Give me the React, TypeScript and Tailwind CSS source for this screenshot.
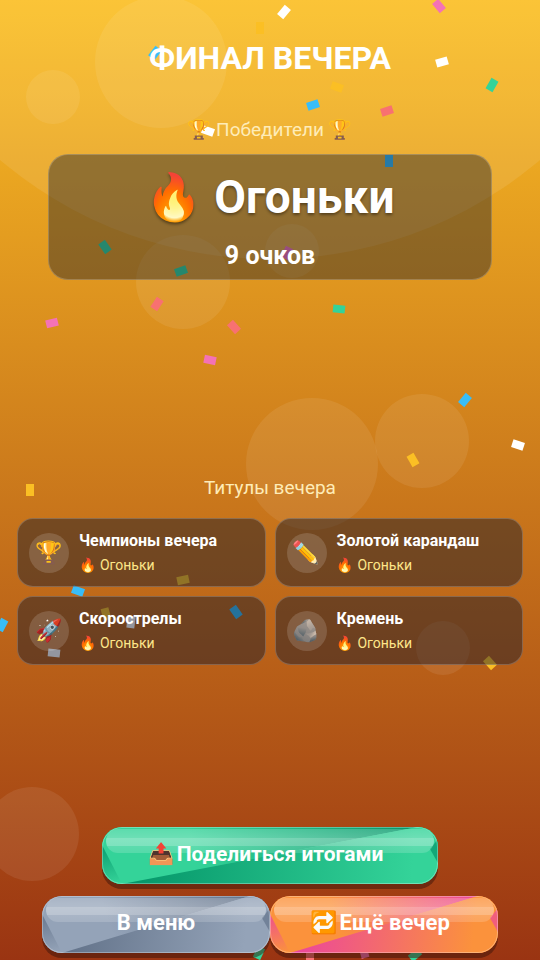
import { useId } from "react";

type Piece = { x: number; y: number; angle: number; color: string };

const YELLOW = "#fbbf24";
const BLUE = "#38bdf8";
const PINK = "#f472b6";
const RED = "#f87171";
const GREEN = "#34d399";
const WHITE = "#ffffff";

const confetti: Piece[] = [
  { x: 260, y: 28, angle: 90, color: YELLOW },
  { x: 155, y: 53, angle: -52, color: BLUE },
  { x: 208, y: 131, angle: 20, color: WHITE },
  { x: 284, y: 12, angle: -50, color: WHITE },
  { x: 439, y: 6, angle: 50, color: PINK },
  { x: 442, y: 62, angle: -16, color: WHITE },
  { x: 492, y: 85, angle: -60, color: GREEN },
  { x: 337, y: 87, angle: 20, color: YELLOW },
  { x: 313, y: 105, angle: -18, color: BLUE },
  { x: 387, y: 111, angle: -18, color: RED },
  { x: 389, y: 161, angle: 90, color: BLUE },
  { x: 105, y: 247, angle: 55, color: GREEN },
  { x: 181, y: 271, angle: -20, color: GREEN },
  { x: 287, y: 253, angle: -65, color: PINK },
  { x: 157, y: 304, angle: -57, color: RED },
  { x: 339, y: 309, angle: 6, color: GREEN },
  { x: 52, y: 323, angle: -14, color: PINK },
  { x: 234, y: 327, angle: 48, color: RED },
  { x: 210, y: 360, angle: 12, color: PINK },
  { x: 465, y: 400, angle: -50, color: BLUE },
  { x: 518, y: 445, angle: 18, color: WHITE },
  { x: 413, y: 460, angle: 60, color: YELLOW },
  { x: 30, y: 490, angle: 90, color: YELLOW },
  { x: 183, y: 580, angle: -12, color: YELLOW },
  { x: 78, y: 591, angle: 20, color: BLUE },
  { x: 2, y: 625, angle: -62, color: BLUE },
  { x: 106, y: 614, angle: 75, color: YELLOW },
  { x: 131, y: 622, angle: 97, color: WHITE },
  { x: 236, y: 612, angle: 55, color: BLUE },
  { x: 54, y: 653, angle: 6, color: WHITE },
  { x: 490, y: 663, angle: 48, color: YELLOW },
  { x: 259, y: 953, angle: -65, color: GREEN },
  { x: 310, y: 957, angle: 90, color: RED },
  { x: 364, y: 952, angle: 75, color: PINK },
  { x: 415, y: 955, angle: -40, color: GREEN },
];

const bubbles = [
  { x: 161, y: 62, r: 66 },
  { x: 53, y: 97, r: 27 },
  { x: 183, y: 282, r: 47 },
  { x: 292, y: 251, r: 27 },
  { x: 312, y: 464, r: 66 },
  { x: 422, y: 441, r: 47 },
  { x: 443, y: 648, r: 27 },
  { x: 32, y: 834, r: 47 },
];

const titles = [
  { icon: "🏆", name: "Чемпионы вечера", team: "Огоньки" },
  { icon: "✏️", name: "Золотой карандаш", team: "Огоньки" },
  { icon: "🚀", name: "Скорострелы", team: "Огоньки" },
  { icon: "🪨", name: "Кремень", team: "Огоньки" },
];

const Backdrop: React.FC = () => (
  <svg
    className="absolute inset-0 h-full w-full"
    viewBox="0 0 540 960"
    preserveAspectRatio="xMidYMid slice"
    aria-hidden="true"
  >
    <circle cx="270" cy="-159" r="418" fill="#fff" fillOpacity="0.09" />
    {bubbles.map((b, i) => (
      <circle key={i} cx={b.x} cy={b.y} r={b.r} fill="#fff" fillOpacity="0.08" />
    ))}
    {confetti.map((p, i) => (
      <rect
        key={i}
        x="-6"
        y="-4"
        width="12"
        height="8"
        fill={p.color}
        transform={`translate(${p.x} ${p.y}) rotate(${p.angle})`}
      />
    ))}
  </svg>
);

type GlossyButtonProps = {
  icon?: string;
  label: string;
  light: string;
  dark: string;
  ratio: number; // nominal width of the facets for a height of 57
  className: string;
};

const GlossyButton: React.FC<GlossyButtonProps> = ({ icon, label, light, dark, ratio: w, className }) => {
  const id = useId();
  return (
    <button
      type="button"
      className={`relative h-[57px] overflow-hidden rounded-[20px] leading-7 font-bold text-white shadow-[0_5px_0_rgba(60,20,10,0.5)] ${className}`}
    >
      {/* faceted body: two big triangles with a sliver at each end */}
      <svg className="absolute inset-0 h-full w-full" viewBox={`0 0 ${w} 57`} preserveAspectRatio="none" aria-hidden="true">
        <defs>
          <linearGradient id={`${id}a`} gradientUnits="userSpaceOnUse" x1="40" y1="57" x2={w - 20} y2="0">
            <stop offset="0.2" stopColor={light} />
            <stop offset="1" stopColor={dark} />
          </linearGradient>
          <linearGradient id={`${id}b`} gradientUnits="userSpaceOnUse" x1="30" y1="40" x2={w - 26} y2="57">
            <stop offset="0" stopColor={dark} />
            <stop offset="1" stopColor={light} />
          </linearGradient>
          <linearGradient id={`${id}c`} gradientUnits="userSpaceOnUse" x1="4" y1="22" x2="12" y2="57">
            <stop offset="0" stopColor={dark} />
            <stop offset="1" stopColor={light} />
          </linearGradient>
        </defs>
        <rect width={w} height="57" fill={light} />
        <path d={`M0 0H${w - 20}L20 57H0Z`} fill={`url(#${id}a)`} />
        <path d={`M20 57L${w - 20} 0H${w}V57Z`} fill={`url(#${id}b)`} />
        <path d="M0 18L20 57H0Z" fill={`url(#${id}c)`} fillOpacity="0.8" />
        <path d={`M${w - 20} 0L${w} 36V0Z`} fill={light} />
        <path d={`M${w - 8} 22L${w} 12V36Z`} fill={dark} fillOpacity="0.7" />
      </svg>
      <span className="absolute inset-x-1 top-0.5 h-6 rounded-[14px] bg-[linear-gradient(to_bottom,rgba(255,255,255,0.2)_0px,rgba(255,255,255,0.28)_9px,rgba(255,255,255,0.4)_9px,rgba(255,255,255,0.36)_17px,rgba(255,255,255,0.2)_17px,rgba(255,255,255,0.16)_24px)]" />
      <span className="absolute inset-0 rounded-[20px] border border-white/30" />
      <span className={`relative flex items-center justify-center gap-0.5 pb-1 ${icon ? "pr-2" : ""}`}>
        {icon && <span>{icon}</span>}
        <span>{label}</span>
      </span>
    </button>
  );
};

const App: React.FC = () => {
  return (
    <main className="relative flex min-h-screen flex-col justify-between overflow-hidden bg-linear-to-b from-[#fbbf24] to-[#9a3412] font-[Roboto,'Noto_Color_Emoji',sans-serif] text-white">
      <Backdrop />

      <header className="relative px-12 pt-9 text-center">
        <h1 className="text-[32px] leading-11 font-bold">ФИНАЛ ВЕЧЕРА</h1>
        <p className="mt-9 text-[19px] leading-7 text-[#feecb8]">🏆 Победители 🏆</p>
        <section className="mt-2.5 rounded-[20px] border border-white/20 bg-slate-900/40 pt-3.5 pb-[7px]">
          <h2 className="text-[46px] leading-14 font-bold text-shadow-[0_2px_3px_rgba(0,0,0,0.4)]">🔥 Огоньки</h2>
          <p className="mt-[15px] text-[25px] leading-8 font-bold">9 очков</p>
        </section>
      </header>

      <section className="relative px-[17px] pt-[34px]">
        <h2 className="text-center text-[19px] leading-6 text-[#feecb8]">Титулы вечера</h2>
        <ul className="mt-[18px] grid grid-cols-2 gap-[9px]">
          {titles.map((t) => (
            <li
              key={t.name}
              className="flex h-[69px] items-center gap-2.5 rounded-2xl border border-white/20 bg-slate-900/45 px-[11px]"
            >
              <span className="flex size-10 shrink-0 items-center justify-center rounded-full bg-white/15 text-[22px]">
                {t.icon}
              </span>
              <div>
                <h3 className="text-base leading-6 font-bold">{t.name}</h3>
                <p className="text-sm leading-6 text-[#fde68a]">🔥 {t.team}</p>
              </div>
            </li>
          ))}
        </ul>
      </section>

      <footer className="relative flex flex-col items-center gap-3 px-[42px] pb-[7px]">
        <GlossyButton
          icon="📤"
          label="Поделиться итогами"
          light="#34d399"
          dark="#059669"
          ratio={336}
          className="w-3/4 max-w-[336px] text-[21px]"
        />
        <div className="flex w-full justify-center">
          <GlossyButton label="В меню" light="#94a3b8" dark="#64748b" ratio={228} className="flex-1 text-[22px]" />
          <GlossyButton icon="🔁" label="Ещё вечер" light="#fb923c" dark="#ec4899" ratio={228} className="flex-1 text-[22px]" />
        </div>
      </footer>
    </main>
  );
};

export default App;
